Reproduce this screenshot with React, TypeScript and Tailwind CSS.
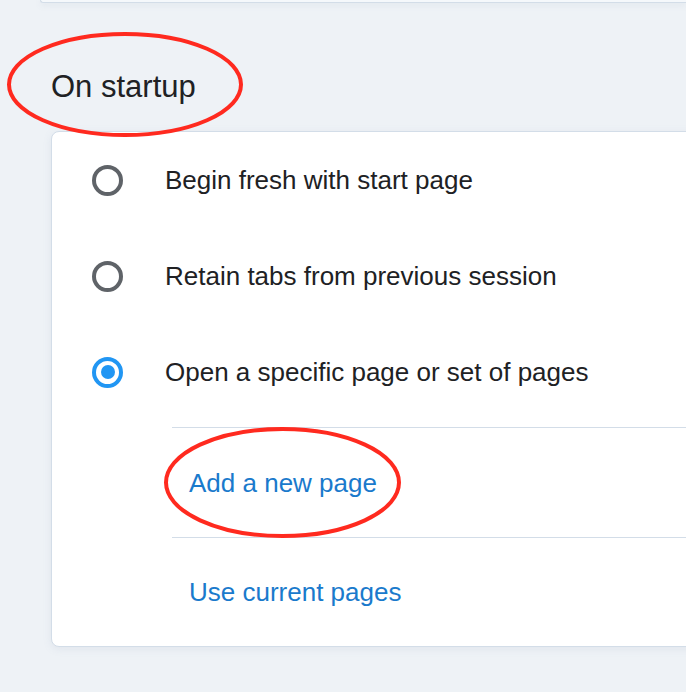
import { useState } from 'react'

const OPTIONS = [
  { id: 'fresh', label: 'Begin fresh with start page' },
  { id: 'retain', label: 'Retain tabs from previous session' },
  { id: 'specific', label: 'Open a specific page or set of pages' },
]

const Radio = ({ checked }: { checked: boolean }) => (
  <span
    className={
      checked
        ? 'flex h-[31px] w-[31px] shrink-0 items-center justify-center rounded-full border-[4px] border-[#2196f3]'
        : 'flex h-[31px] w-[31px] shrink-0 items-center justify-center rounded-full border-[4px] border-[#5f6368]'
    }
  >
    {checked ? <span className="h-[14px] w-[14px] rounded-full bg-[#2196f3]" /> : null}
  </span>
)

const App = () => {
  const [selected, setSelected] = useState('specific')

  return (
    <div
      className="relative h-[692px] w-full overflow-hidden bg-[#eef2f6] text-[#202124]"
      style={{ fontFamily: '"Liberation Sans", Arial, sans-serif' }}
    >
      {/* bottom edge of the previous section */}
      <div className="ml-[40px] h-[3px] rounded-bl-md border-b border-l border-[#d3dde8] bg-[#f5f8fb] shadow-[0_2px_6px_rgba(120,140,170,0.15)]" />

      <h2 className="ml-[51px] flex h-[128px] items-center pt-[38px] text-[31px] font-normal leading-none">On startup</h2>

      <div className="ml-[51px] w-[700px] rounded-lg border border-[#d3dde8] bg-white shadow-[0_2px_8px_rgba(120,140,170,0.12)]">
        {OPTIONS.map((option) => (
          <button
            key={option.id}
            type="button"
            onClick={() => setSelected(option.id)}
            className="flex h-[96px] w-full items-center gap-[42px] pl-[40px] text-left text-[26px] leading-none"
          >
            <Radio checked={selected === option.id} />
            <span>{option.label}</span>
          </button>
        ))}

        <div className="mt-[7px] ml-[120px] border-t border-[#d3dde8]">
          <div className="flex h-[109px] items-center pl-[17px] text-[26px] leading-none text-[#1a7acc]">Add a new page</div>
          <div className="flex h-[109px] items-center border-t border-[#d3dde8] pl-[17px] text-[26px] leading-none text-[#1a7acc]">
            Use current pages
          </div>
        </div>
      </div>

      {/* annotation marks */}
      <svg className="pointer-events-none absolute inset-0" width="686" height="692" viewBox="0 0 686 692">
        <ellipse cx="125" cy="84.5" rx="116" ry="50.5" fill="none" stroke="#ff2a1f" strokeWidth="4" />
        <ellipse cx="282.5" cy="482.5" rx="116.5" ry="53.5" fill="none" stroke="#ff2a1f" strokeWidth="4" />
      </svg>
    </div>
  )
}

export default App
